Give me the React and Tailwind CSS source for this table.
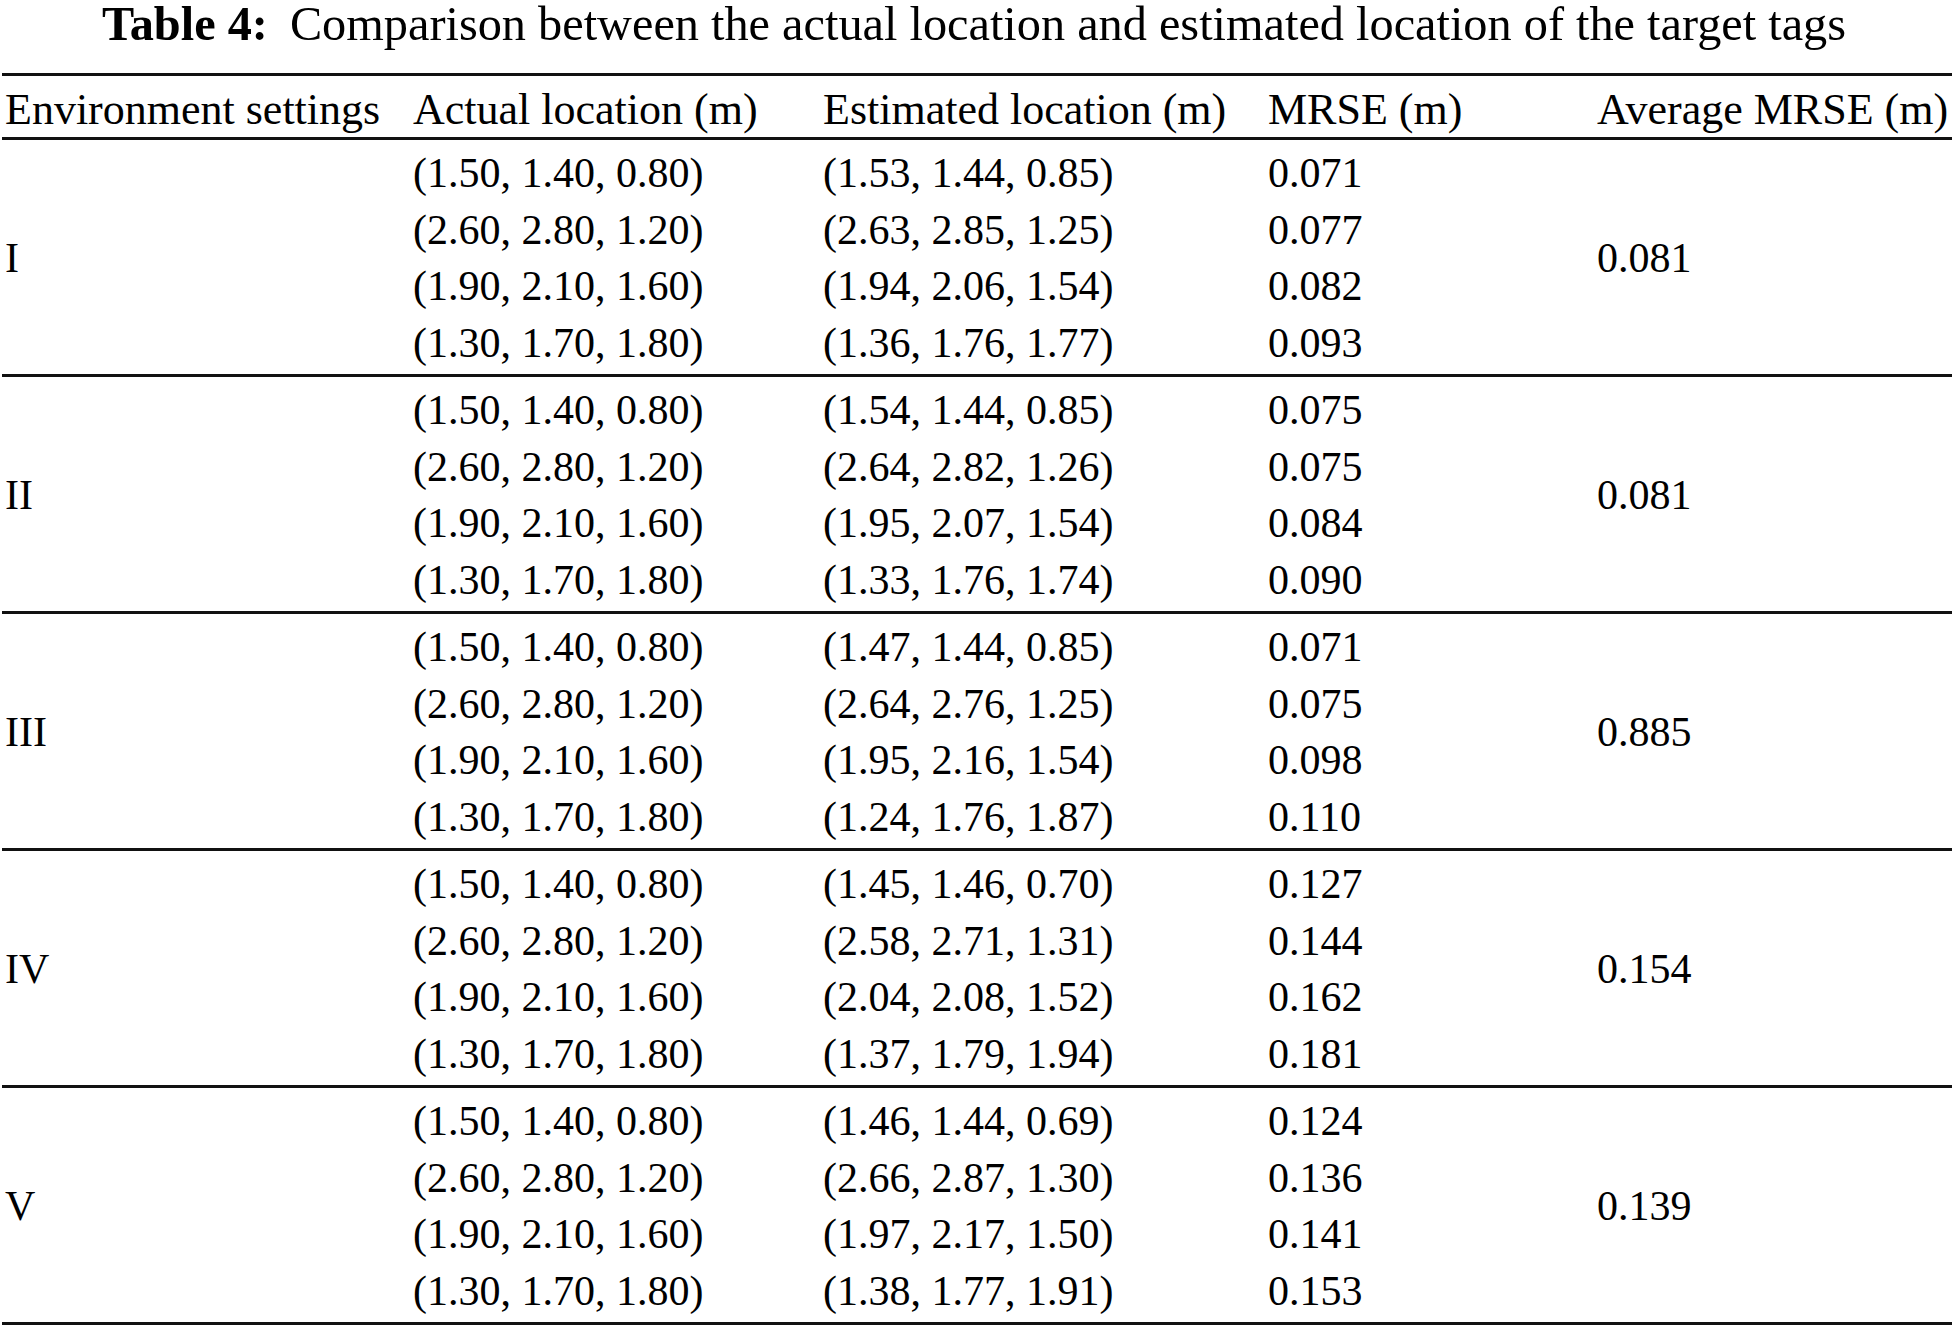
import React from 'react';

const groups = [
    {
        env: 'I',
        avg: '0.081',
        rows: [
            ['(1.50, 1.40, 0.80)', '(1.53, 1.44, 0.85)', '0.071'],
            ['(2.60, 2.80, 1.20)', '(2.63, 2.85, 1.25)', '0.077'],
            ['(1.90, 2.10, 1.60)', '(1.94, 2.06, 1.54)', '0.082'],
            ['(1.30, 1.70, 1.80)', '(1.36, 1.76, 1.77)', '0.093'],
        ],
    },
    {
        env: 'II',
        avg: '0.081',
        rows: [
            ['(1.50, 1.40, 0.80)', '(1.54, 1.44, 0.85)', '0.075'],
            ['(2.60, 2.80, 1.20)', '(2.64, 2.82, 1.26)', '0.075'],
            ['(1.90, 2.10, 1.60)', '(1.95, 2.07, 1.54)', '0.084'],
            ['(1.30, 1.70, 1.80)', '(1.33, 1.76, 1.74)', '0.090'],
        ],
    },
    {
        env: 'III',
        avg: '0.885',
        rows: [
            ['(1.50, 1.40, 0.80)', '(1.47, 1.44, 0.85)', '0.071'],
            ['(2.60, 2.80, 1.20)', '(2.64, 2.76, 1.25)', '0.075'],
            ['(1.90, 2.10, 1.60)', '(1.95, 2.16, 1.54)', '0.098'],
            ['(1.30, 1.70, 1.80)', '(1.24, 1.76, 1.87)', '0.110'],
        ],
    },
    {
        env: 'IV',
        avg: '0.154',
        rows: [
            ['(1.50, 1.40, 0.80)', '(1.45, 1.46, 0.70)', '0.127'],
            ['(2.60, 2.80, 1.20)', '(2.58, 2.71, 1.31)', '0.144'],
            ['(1.90, 2.10, 1.60)', '(2.04, 2.08, 1.52)', '0.162'],
            ['(1.30, 1.70, 1.80)', '(1.37, 1.79, 1.94)', '0.181'],
        ],
    },
    {
        env: 'V',
        avg: '0.139',
        rows: [
            ['(1.50, 1.40, 0.80)', '(1.46, 1.44, 0.69)', '0.124'],
            ['(2.60, 2.80, 1.20)', '(2.66, 2.87, 1.30)', '0.136'],
            ['(1.90, 2.10, 1.60)', '(1.97, 2.17, 1.50)', '0.141'],
            ['(1.30, 1.70, 1.80)', '(1.38, 1.77, 1.91)', '0.153'],
        ],
    },
];

const App = () => {
    return (
        <div className="w-[1954px] bg-white text-black font-['Liberation_Serif','Times_New_Roman',serif]">
            <h1 className="text-center text-[48.3px] leading-[48px] font-normal whitespace-nowrap pr-[6px]">
                <span className="font-bold">Table 4:</span>
                <span className="ml-[22px]">Comparison between the actual location and estimated location of the target tags</span>
            </h1>

            <div className="mt-[25px] mx-[2px] border-t-[3px] border-[#111]">
                {/* header */}
                <div className="grid grid-cols-[408px_410px_445px_329px_1fr] items-center h-[64px] pt-[7px] pl-[3px] text-[44px] leading-none whitespace-nowrap border-b-[3px] border-[#111]">
                    <div>Environment settings</div>
                    <div>Actual location (m)</div>
                    <div>Estimated location (m)</div>
                    <div>MRSE (m)</div>
                    <div>Average MRSE (m)</div>
                </div>

                {groups.map((g) => (
                    <div
                        key={g.env}
                        className="grid grid-cols-[408px_410px_445px_329px_1fr] pl-[3px] pt-[5px] pb-[3px] text-[42px] leading-[56.5px] whitespace-nowrap border-b-[3px] border-[#111]"
                    >
                        <div className="flex items-center">{g.env}</div>
                        <div className="flex flex-col">
                            {g.rows.map((r, i) => (
                                <div key={i}>{r[0]}</div>
                            ))}
                        </div>
                        <div className="flex flex-col">
                            {g.rows.map((r, i) => (
                                <div key={i}>{r[1]}</div>
                            ))}
                        </div>
                        <div className="flex flex-col">
                            {g.rows.map((r, i) => (
                                <div key={i}>{r[2]}</div>
                            ))}
                        </div>
                        <div className="flex items-center">{g.avg}</div>
                    </div>
                ))}
            </div>
        </div>
    );
};

export default App;
